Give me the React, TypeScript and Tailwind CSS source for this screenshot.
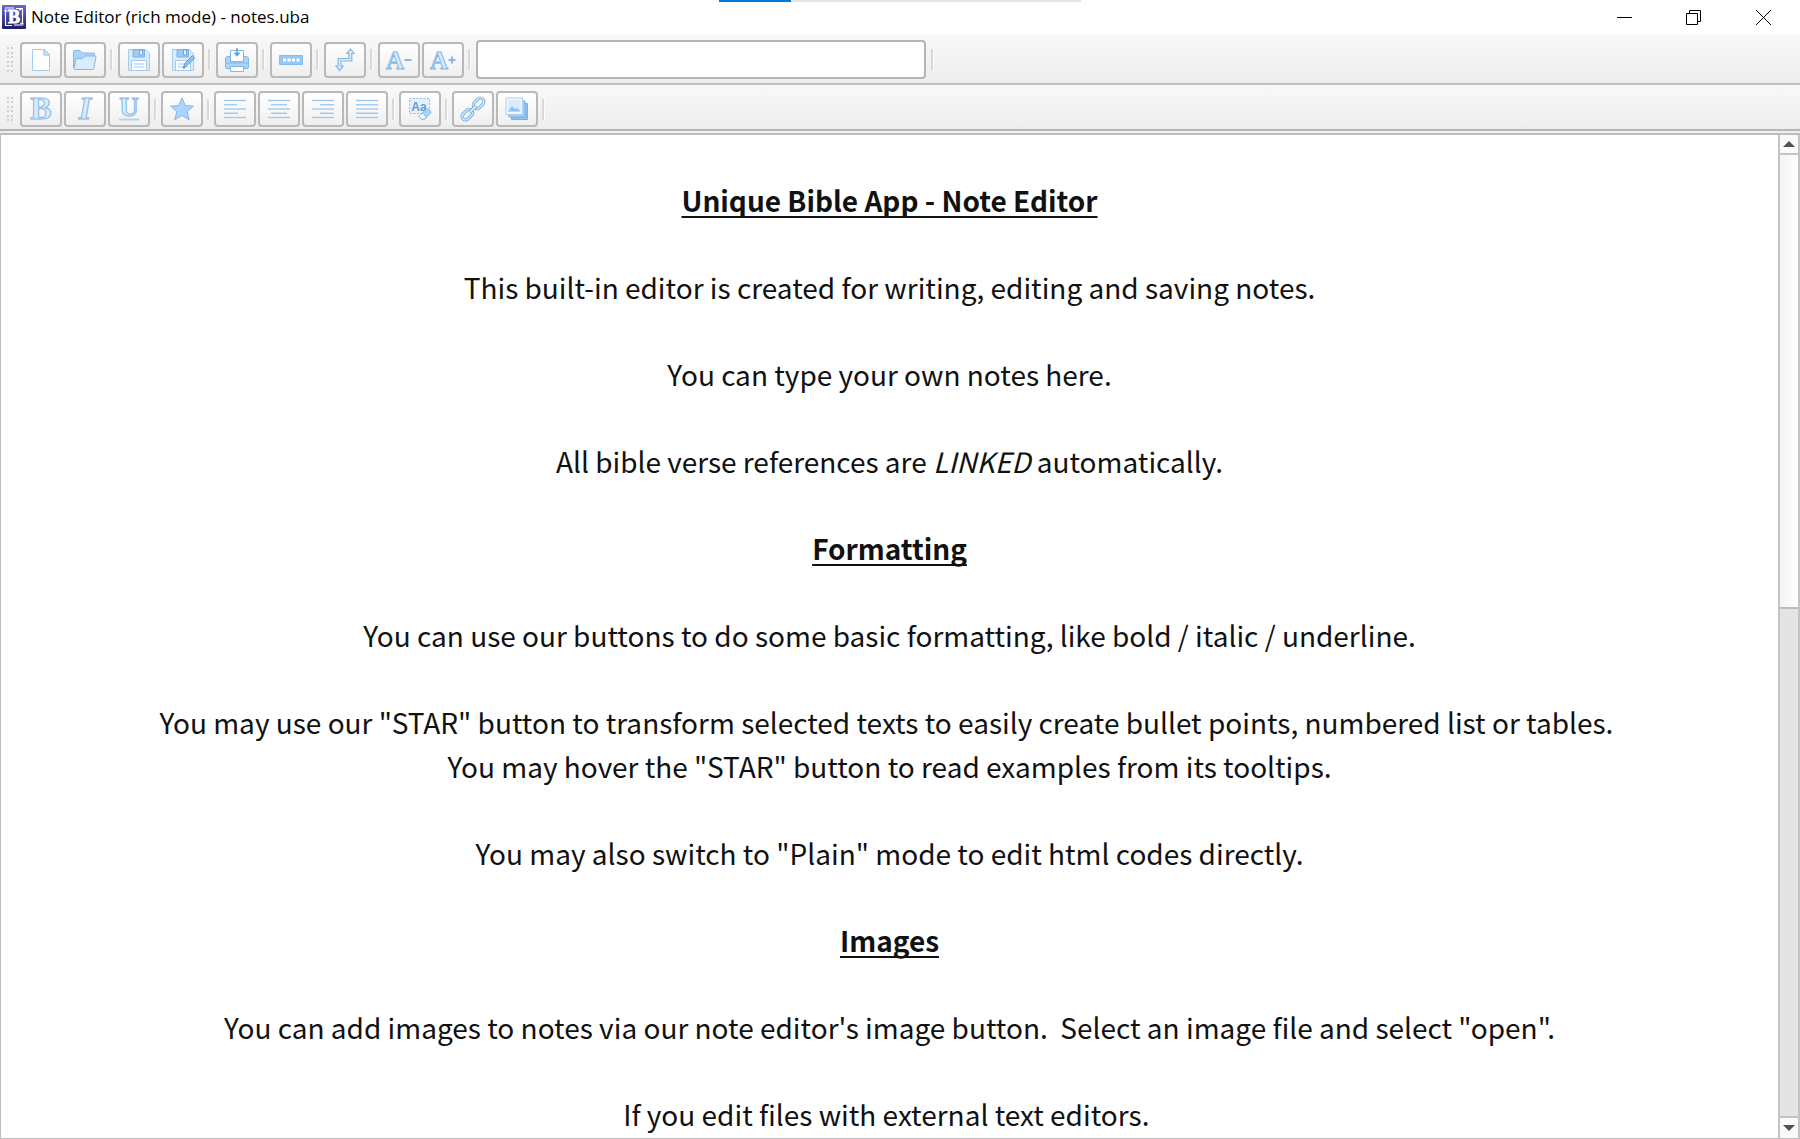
import type { ReactNode } from "react";

const LINE = "#85b7e6";
const MID = "#a9d3fa";
const PALE = "#d9ecfd";

function Icon({ children }: { children: ReactNode }) {
  return (
    <svg viewBox="0 0 24 24" className="size-6 overflow-visible" fill="none" stroke={LINE} strokeWidth="1" aria-hidden="true">
      {children}
    </svg>
  );
}

function Glyph({ char, italic, x = 12, y = 20, size = 26 }: { char: string; italic?: boolean; x?: number; y?: number; size?: number }) {
  return (
    <text
      x={x}
      y={y}
      fontSize={size}
      textAnchor="middle"
      fontFamily="'Liberation Serif', serif"
      fontWeight="bold"
      fontStyle={italic ? "italic" : "normal"}
      fill={PALE}
      stroke={LINE}
    >
      {char}
    </text>
  );
}

function Lines({ rows }: { rows: [number, number][] }) {
  return (
    <Icon>
      {rows.map(([from, to], i) => (
        <path key={i} d={`M${from} ${3.5 + i * 4.25}H${to}`} stroke="#9cc6ee" strokeWidth="1.3" />
      ))}
    </Icon>
  );
}

const Floppy = () => (
  <>
    <path d="M1.5 1.5h17l4 4v17h-21z" fill={PALE} stroke="#a3cbf0" />
    <path d="M6 1.5h11.5v7.5H6z" fill="#9ccbf7" stroke="#7fb2e2" />
    <path d="M12.5 2v5h3V2z" fill="#e8f4ff" stroke="#6ba5dc" />
    <path d="M4.5 12.5h15v10h-15z" fill="#fff" stroke="#a3cbf0" />
    <path d="M7 16h10M7 19h10" stroke="#9cc6ee" />
  </>
);

const icons = {
  file: (
    <Icon>
      <path d="M3.5 1.5H15l5.5 5.5v15.500h-17z" fill="#fff" stroke="#a3cbf0" />
      <path d="M15 1.500v5.500h5.500z" fill={PALE} stroke="#8bbce8" />
    </Icon>
  ),
  folder: (
    <Icon>
      <path d="M.5 20V3.500q0-1 1-1H7l2.500 2.500h11q1 0 1 1V9" fill={MID} />
      <path d="M1.500 21.500h18q1 0 1.200-1L23 9q.2-1-1-1h-10l-2.500 2.500H4q-1 0-1.200 1L1 20.500z" fill={PALE} />
    </Icon>
  ),
  save: <Icon><Floppy /></Icon>,
  saveAs: (
    <Icon>
      <Floppy />
      <path d="M12.500 19.500l1.200-4L21.500 7.500l2.300 2.300-8 8z" fill="#8fc3f3" stroke="#5f9bd3" />
      <path d="M12 20l2-.7" stroke="#5f9bd3" strokeWidth="2" />
    </Icon>
  ),
  print: (
    <Icon>
      <path d="M3 8.500h18q2.500 0 2.500 2.500v8q0 1.500-1.500 1.500H2q-1.500 0-1.500-1.500v-8Q.5 8.500 3 8.500z" fill={MID} />
      <path d="M5.500 2.500h13v11h-13z" fill="#fff" />
      <path d="M1 15h22" />
      <path d="M5.500 18.500h13v5h-13z" fill="#fff" />
      <path d="M12 0v7M9.500 4.500L12 7.500l2.500-3" stroke="#5f9bd3" strokeWidth="1.500" />
    </Icon>
  ),
  mode: (
    <Icon>
      <path d="M.5 7.500h23v9H.5z" fill="#94c8f8" stroke="#88bcec" />
      <path d="M4 10.500h3v3H4zM8.500 10.500h3v3h-3zM13 10.500h3v3h-3zM17.500 10.500h3v3h-3z" fill="#fff" stroke="none" />
    </Icon>
  ),
  wrap: (
    <Icon>
      <path d="M17.500 1L21 5.500h-2.200V13H8v5h2.200L6.500 22.500 3 18h2.200v-7.500H16V5.500h-2.200z" fill={PALE} strokeWidth="1.200" />
    </Icon>
  ),
  smaller: (
    <Icon>
      <Glyph char="A" x={8} y={21} size={25} />
      <path d="M17.500 12h7" strokeWidth="2" />
    </Icon>
  ),
  larger: (
    <Icon>
      <Glyph char="A" x={8} y={21} size={25} />
      <path d="M21 8.500v7M17.500 12h7" strokeWidth="2" />
    </Icon>
  ),
  bold: <Icon><Glyph char="B" y={22} size={32} /></Icon>,
  italic: <Icon><Glyph char="I" y={22} size={32} italic /></Icon>,
  underline: (
    <Icon>
      <Glyph char="U" y={19} size={27} />
      <path d="M2 22.500h20" stroke="#b5d6f3" strokeWidth="2" />
    </Icon>
  ),
  star: (
    <Icon>
      <path d="M12 .8l3.200 7.700 8.200.7-6.200 5.400 2 8.200-7.200-4.400-7.200 4.400 2-8.200L.6 9.200l8.200-.7z" fill="#a9d5ff" stroke="#83b8ea" />
    </Icon>
  ),
  left: <Lines rows={[[1, 23], [1, 14], [1, 23], [1, 15], [1, 23]]} />,
  center: <Lines rows={[[1, 23], [4, 20], [1, 23], [4, 20], [1, 23]]} />,
  right: <Lines rows={[[1, 23], [9, 23], [1, 23], [9, 23], [1, 23]]} />,
  justify: <Lines rows={[[1, 23], [1, 23], [1, 23], [1, 23], [1, 23]]} />,
  clear: (
    <Icon>
      <path d="M1.500 1.500h20v15h-20z" fill="#e3f1fd" strokeDasharray="2 1.500" stroke="#8bbce8" />
      <text x="11" y="14" fontSize="12" textAnchor="middle" fontFamily="'Liberation Sans', sans-serif" fontWeight="bold" fill="#5f9bd3" stroke="none">Aa</text>
      <path d="M11.500 18.500l7-6.500q1-.8 2 .2l2 2q1 1 0 2l-6 6q-1.500 1.300-3 0l-2-1.700q-1-1 0-2z" fill={MID} />
      <path d="M14.500 16l3.800 4-2 2q-1.300 1.200-2.800 0l-2-1.700q-1-1 0-2z" fill="#fff" />
    </Icon>
  ),
  link: (
    <Icon>
      <g transform="rotate(-45 12 12)">
        <rect x="-2" y="8.500" width="12" height="7" rx="3.500" stroke={LINE} strokeWidth="3.400" />
        <rect x="-2" y="8.500" width="12" height="7" rx="3.500" stroke={PALE} strokeWidth="1.300" />
        <rect x="14" y="8.500" width="12" height="7" rx="3.500" stroke={LINE} strokeWidth="3.400" />
        <rect x="14" y="8.500" width="12" height="7" rx="3.500" stroke={PALE} strokeWidth="1.300" />
        <path d="M7.500 12h9" strokeWidth="4" />
        <path d="M8 12h8" stroke={PALE} strokeWidth="1.800" />
      </g>
    </Icon>
  ),
  image: (
    <Icon>
      <path d="M6.500 6.500h16v16h-16z" fill="#8cc1f2" stroke="#79afe2" />
      <path d="M4 4h16v16H4z" fill={MID} stroke="#79afe2" />
      <path d="M1 1h16.500v16.500H1z" fill="#f2f8fe" stroke="#a8cdf0" />
      <path d="M3 3h12.500v12H3z" fill={PALE} stroke="none" />
      <path d="M3 14.500l4-5.500 3 3.500 2-2 3.500 4z" fill="#8fc3f3" stroke="none" />
    </Icon>
  ),
};

type Tool = { icon: keyof typeof icons; label: string };

function ToolButton({ icon, label }: Tool) {
  return (
    <button
      type="button"
      aria-label={label}
      title={label}
      className="flex h-9 w-[42px] shrink-0 items-center justify-center rounded border-2 border-[#b9b9b9] bg-linear-to-b from-white to-[#efefef]"
    >
      {icons[icon]}
    </button>
  );
}

function Handle() {
  return (
    <div className="mr-1.5 ml-[7px] grid h-[25px] w-[7px] shrink-0 grid-cols-2 content-between justify-between">
      {Array.from({ length: 12 }, (_, i) => (
        <span key={i} className="size-0.5 bg-[#cfcfcf]" />
      ))}
    </div>
  );
}

const Separator = () => <div className="h-[21px] w-[3px] shrink-0 border-r border-l-2 border-l-[#d9d9d9] border-r-[#fcfcfc]" />;

const fileTools: Tool[][] = [
  [{ icon: "file", label: "New" }, { icon: "folder", label: "Open" }],
  [{ icon: "save", label: "Save" }, { icon: "saveAs", label: "Save as" }],
  [{ icon: "print", label: "Print" }],
  [{ icon: "mode", label: "Switch mode" }],
  [{ icon: "wrap", label: "Toggle toolbars" }],
  [{ icon: "smaller", label: "Decrease font size" }, { icon: "larger", label: "Increase font size" }],
];

const formatTools: Tool[][] = [
  [{ icon: "bold", label: "Bold" }, { icon: "italic", label: "Italic" }, { icon: "underline", label: "Underline" }],
  [{ icon: "star", label: "Custom format" }],
  [
    { icon: "left", label: "Align left" },
    { icon: "center", label: "Align center" },
    { icon: "right", label: "Align right" },
    { icon: "justify", label: "Justify" },
  ],
  [{ icon: "clear", label: "Clear format" }],
  [{ icon: "link", label: "Add link" }, { icon: "image", label: "Insert image" }],
];

function Group({ tools, className }: { tools: Tool[]; className: string }) {
  return (
    <div className={`flex items-center ${className}`}>
      <div className="flex gap-0.5">
        {tools.map((t) => (
          <ToolButton key={t.icon} {...t} />
        ))}
      </div>
      <Separator />
    </div>
  );
}

function TitleBar() {
  return (
    <header className="relative flex h-[34px] shrink-0 items-center bg-white pl-0.5">
      <div className="absolute top-0 left-1/2 flex h-0.5 w-[362px] -translate-x-1/2 bg-[#e5e5e5]">
        <div className="w-1/5 bg-[#0078d7]" />
      </div>
      <svg viewBox="0 0 24 24" className="size-6" aria-hidden="true">
        <defs>
          <linearGradient id="logo" x1="0" y1="0" x2="0" y2="1">
            <stop offset="0" stopColor="#6a6ad0" />
            <stop offset="1" stopColor="#1d1d68" />
          </linearGradient>
        </defs>
        <rect width="24" height="24" rx="1" fill="url(#logo)" />
        <path d="M3 3h9M14 3.500h7M3.500 4v16M20.500 5v15M3 20.500h7M12 20h9M2 6h5M17 5l4-1M18 18l4 1" stroke="#fff" strokeWidth="1.200" fill="none" />
        <text x="12" y="18" fontSize="18" textAnchor="middle" fontFamily="'Liberation Serif', serif" fontWeight="bold" fill="#fff" stroke="#fff" strokeWidth=".8">B</text>
      </svg>
      <h1 className="ml-[5px] text-[17px] whitespace-nowrap text-black">Note Editor (rich mode) - notes.uba</h1>
      <div className="ml-auto flex h-full">
        <button type="button" aria-label="Minimize" className="flex w-[69px] items-center justify-center">
          <svg viewBox="0 0 15 15" className="size-[15px]" stroke="#000" fill="none"><path d="M0 7.500h15" /></svg>
        </button>
        <button type="button" aria-label="Restore" className="flex w-[69px] items-center justify-center">
          <svg viewBox="0 0 15 15" className="size-[15px]" stroke="#000" fill="none"><path d="M.5 3.500h11v11H.5zM3.500 3.500v-3h11v11h-3" /></svg>
        </button>
        <button type="button" aria-label="Close" className="mr-px flex w-[71px] items-center justify-center">
          <svg viewBox="0 0 15 15" className="size-[15px]" stroke="#000" fill="none"><path d="M0 0l15 15M15 0L0 15" /></svg>
        </button>
      </div>
    </header>
  );
}

function ScrollBar() {
  return (
    <div className="flex w-[22px] shrink-0 flex-col border-x-2 border-x-[#c4c4c4] bg-[#e4e4e4]">
      <button type="button" aria-label="Scroll up" className="flex h-[20px] items-center justify-center border-b-2 border-[#c4c4c4] bg-[#f9f9f9]">
        <svg viewBox="0 0 12 6" className="h-1.5 w-3"><path d="M0 6L6 0l6 6z" fill="#505050" /></svg>
      </button>
      <div className="flex-1">
        <div className="h-[47.2%] border-b-2 border-[#bdbdbd] bg-linear-to-r from-[#f4f4f4] to-white" />
      </div>
      <button type="button" aria-label="Scroll down" className="flex h-[22px] items-center justify-center border-t-2 border-[#c4c4c4] bg-[#f9f9f9]">
        <svg viewBox="0 0 12 6" className="h-1.5 w-3"><path d="M0 0h12L6 6z" fill="#505050" /></svg>
      </button>
    </div>
  );
}

const heading = "font-bold underline decoration-2 underline-offset-4 [text-decoration-skip-ink:none]";

export default function App() {
  return (
    <div className="flex h-screen flex-col overflow-hidden bg-[#efefef] font-['Open_Sans','Noto_Sans',sans-serif]">
      <TitleBar />
      <div role="toolbar" aria-label="File" className="flex h-[51px] shrink-0 items-center border-b-2 border-[#bfbfbf] bg-linear-to-b from-[#f9f9f9] to-[#ededed] pt-0.5">
        <Handle />
        <div className="flex items-center gap-[5px]">
          {fileTools.map((g, i) => (
            <Group key={i} tools={g} className="gap-1" />
          ))}
          <input aria-label="Search" type="text" className="h-[39px] w-[450px] rounded border-2 border-[#b5b5b5] bg-white px-2 text-lg outline-none" />
          <Separator />
        </div>
      </div>
      <div role="toolbar" aria-label="Format" className="flex h-[46px] shrink-0 items-center border-b-2 border-[#b5b5b5] bg-linear-to-b from-[#f9f9f9] to-[#ededed] pt-1">
        <Handle />
        <div className="flex items-center gap-1">
          {formatTools.map((g, i) => (
            <Group key={i} tools={g} className="gap-1" />
          ))}
        </div>
      </div>
      <main className="mt-0.5 flex min-h-0 flex-1 border-t-2 border-b border-l border-[#bdbdbd] bg-white">
        <div
          role="textbox"
          aria-multiline="true"
          aria-label="Note"
          className="flex min-w-0 flex-1 flex-col gap-[43px] overflow-hidden pt-[43px] text-center font-['Noto_Sans_CJK_SC',sans-serif] text-[28px] leading-[44px] whitespace-pre-wrap text-[#111]"
        >
          <h2 className={heading}>Unique Bible App - Note Editor</h2>
          <p>This built-in editor is created for writing, editing and saving notes.</p>
          <p>You can type your own notes here.</p>
          <p>All bible verse references are <em>LINKED</em> automatically.</p>
          <h2 className={heading}>Formatting</h2>
          <p>You can use our buttons to do some basic formatting, like bold / italic / underline.</p>
          <p>
            {'You may use our "STAR" button to transform selected texts to easily create bullet points, numbered list or tables.\u00a0'}
            <br />
            {'You may hover the "STAR" button to read examples from its tooltips.'}
          </p>
          <p>{'You may also switch to "Plain" mode to edit html codes directly.'}</p>
          <h2 className={heading}>Images</h2>
          <p>{'You can add images to notes via our note editor\'s image button.  Select an image file and select "open".'}</p>
          <p>{"If you edit files with external text editors.\u00a0"}</p>
        </div>
        <ScrollBar />
      </main>
    </div>
  );
}
